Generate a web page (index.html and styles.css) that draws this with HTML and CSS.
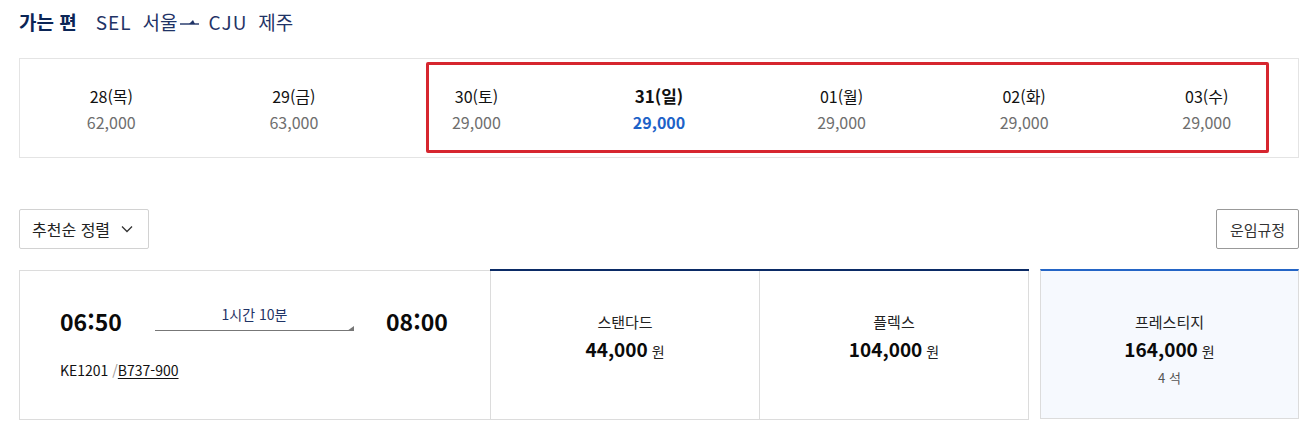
FILE: index.html
```html
<!DOCTYPE html>
<html lang="ko">
<head>
<meta charset="utf-8">
<link rel="stylesheet" href="styles.css">
</head>
<body>
<div class="page">
  <h2 class="route">
    <span class="dir">가는 편</span>
    <span class="code">SEL</span><span class="city">서울</span>
    <svg class="plane" width="19" height="10" viewBox="0 0 19 10"><path d="M0 7 H19" stroke="#1f3366" stroke-width="1.4"/><path d="M9 7 L13 3 L15 7 Z" fill="#1f3366"/></svg>
    <span class="code">CJU</span><span class="city">제주</span>
  </h2>

  <div class="dates">
    <div class="date"><span class="d">28(목)</span><span class="p">62,000</span></div>
    <div class="date"><span class="d">29(금)</span><span class="p">63,000</span></div>
    <div class="date"><span class="d">30(토)</span><span class="p">29,000</span></div>
    <div class="date on"><span class="d">31(일)</span><span class="p">29,000</span></div>
    <div class="date"><span class="d">01(월)</span><span class="p">29,000</span></div>
    <div class="date"><span class="d">02(화)</span><span class="p">29,000</span></div>
    <div class="date"><span class="d">03(수)</span><span class="p">29,000</span></div>
    <div class="highlight"></div>
  </div>

  <div class="toolbar">
    <button class="sort">추천순 정렬
      <svg width="12" height="8" viewBox="0 0 12 8"><path d="M1 1.5 L6 6.5 L11 1.5" fill="none" stroke="#333" stroke-width="1.3"/></svg>
    </button>
    <button class="rule">운임규정</button>
  </div>

  <div class="flight">
    <div class="info">
      <div class="times">
        <span class="t">06:50</span>
        <div class="dur">
          <span class="dtext">1시간 10분</span>
          <span class="line"></span>
        </div>
        <span class="t">08:00</span>
      </div>
      <div class="fno">KE1201 <span class="slash">/</span><u>B737-900</u></div>
    </div>
    <div class="fares">
      <div class="fare"><span class="name">스탠다드</span><span class="price"><b>44,000</b> 원</span></div>
      <div class="fare"><span class="name">플렉스</span><span class="price"><b>104,000</b> 원</span></div>
    </div>
    <div class="fare prestige"><span class="name">프레스티지</span><span class="price"><b>164,000</b> 원</span><span class="seat">4 석</span></div>
  </div>
</div>
</body>
</html>
```

FILE: styles.css
```css
* { box-sizing: border-box; }
body {
  margin: 0;
  background: #fff;
  font-family: "Noto Sans CJK KR", "Noto Sans", sans-serif;
  color: #111;
}
.page {
  width: 1316px;
  padding: 9px 17px 0 19px;
}
.route {
  margin: 0;
  height: 26px;
  display: flex;
  align-items: center;
  font-size: 19px;
  font-weight: 400;
  line-height: 26px;
  color: #1f3366;
}
.route .dir {
  font-weight: 700;
  color: #0b2556;
  margin-right: 19px;
}
.route .code { margin-right: 11px; letter-spacing: 1px; }
.route .plane { margin: 0 10px 0 2px; }

.dates {
  position: relative;
  margin-top: 23px;
  height: 100px;
  border: 1px solid #e4e4e4;
  display: grid;
  grid-template-columns: repeat(7, 1fr);
}
.date {
  display: flex;
  flex-direction: column;
  align-items: center;
  justify-content: center;
  gap: 2px;
  padding-top: 1px;
  font-size: 16px;
  line-height: 24px;
}
.date .d { color: #111; }
.date .p { color: #6e6e6e; }
.date.on .d { font-weight: 700; font-size: 17px; }
.date.on .p { font-weight: 700; color: #1d62c8; }
.highlight {
  position: absolute;
  left: 406px;
  top: 3px;
  width: 843px;
  height: 91px;
  border: 3px solid #d6262f;
  border-radius: 2px;
}

.toolbar {
  margin-top: 51px;
  display: flex;
  justify-content: space-between;
}
.toolbar button {
  font-family: inherit;
  background: #fff;
  border: 1px solid #d2d2d2;
  border-radius: 2px;
  height: 40px;
  font-size: 15px;
  color: #222;
  display: flex;
  align-items: center;
  cursor: pointer;
}
.sort {
  width: 130px;
  padding: 0 0 0 12px;
  gap: 11px;
  font-size: 16px !important;
}
.rule {
  width: 83px;
  justify-content: center;
  padding: 0;
  border-color: #999 !important;
  color: #333 !important;
}

.flight {
  margin-top: 20px;
  display: flex;
  align-items: flex-start;
}
.info {
  width: 471px;
  flex-shrink: 0;
  height: 150px;
  margin-top: 1px;
  border: 1px solid #dcdcdc;
  border-right: none;
  padding: 34px 0 0 40px;
}
.times {
  display: flex;
  align-items: flex-start;
}
.t {
  font-size: 23px;
  font-weight: 700;
  line-height: 32px;
  width: 64px;
  color: #0a0a0a;
}
.dur {
  width: 199px;
  margin: 0 32px 0 31px;
  display: flex;
  flex-direction: column;
  align-items: center;
}
.dtext {
  font-size: 14px;
  line-height: 18px;
  color: #1f3366;
}
.line {
  display: block;
  width: 199px;
  height: 6px;
  margin-top: 2px;
  position: relative;
  border-bottom: 1px solid #777;
}
.line::after {
  content: "";
  position: absolute;
  right: 0;
  bottom: -1px;
  border-style: solid;
  border-width: 0 0 5px 7px;
  border-color: transparent transparent #777 transparent;
}
.fno {
  margin-top: 23px;
  font-size: 14px;
  line-height: 20px;
  color: #111;
}
.fno .slash { color: #999; }
.fno u { text-underline-offset: 2px; }

.fares {
  display: flex;
  flex-shrink: 0;
  border-top: 2px solid #0b2b66;
}
.fare {
  display: flex;
  flex-direction: column;
  align-items: center;
  height: 149px;
  border: 1px solid #dcdcdc;
  border-top: none;
  padding-top: 40px;
}
.fares .fare { width: 270px; }
.fares .fare + .fare { width: 269px; border-left: none; }
.fare .name {
  font-size: 15px;
  line-height: 22px;
  color: #222;
}
.fare .price {
  font-size: 14px;
  line-height: 28px;
  margin-top: 2px;
  color: #222;
}
.fare .price b {
  font-size: 19px;
  font-weight: 700;
  color: #0a0a0a;
}
.fare .seat {
  font-size: 13px;
  line-height: 20px;
  margin-top: 3px;
  color: #555;
}
.prestige {
  width: 259px;
  flex-shrink: 0;
  margin-left: 11px;
  height: 150px;
  border-top: 2px solid #2465c6;
  background: #f6f9fe;
}
```
